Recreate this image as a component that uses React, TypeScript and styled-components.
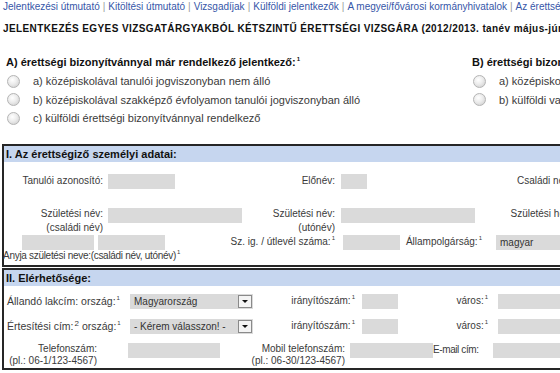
import React from "react";
import styled, { createGlobalStyle } from "styled-components";

const GlobalStyle = createGlobalStyle`
  html, body {
    margin: 0;
    padding: 0;
    overflow: hidden;
    background: #fff;
  }
  body {
    font-family: "Liberation Sans", Arial, sans-serif;
    font-size: 10px;
    color: #3a3a3a;
  }
`;

// Page
const Page = styled.div`
  width: 900px;
  padding-left: 2px;
`;

// Top navigation
const Nav = styled.div`
  padding: 1px 0 0 1px;
  height: 13px;
  line-height: 12px;
  white-space: nowrap;
`;

const NavLink = styled.a`
  color: #3656a8;
  text-decoration: none;
`;

const Sep = styled.span`
  color: #9a9a9a;
  margin: 0 3px;
`;

const Title = styled.h1`
  margin: 8px 0 0 1px;
  font-size: 10px;
  line-height: 14px;
  font-weight: bold;
  letter-spacing: 0.4px;
  color: #111;
  white-space: nowrap;
`;

// Applicant type choice
const Choices = styled.div`
  display: flex;
  margin-top: 19px;
`;

const ChoiceColumn = styled.div<{ $w: number }>`
  width: ${(p) => p.$w}px;
  flex-shrink: 0;
  padding-left: 4px;
  box-sizing: border-box;
`;

const ChoiceTitle = styled.div`
  font-weight: bold;
  font-size: 11px;
  line-height: 14px;
  color: #111;
  white-space: nowrap;
  margin-bottom: 3px;
`;

const RadioRow = styled.label`
  display: flex;
  align-items: center;
  height: 18.5px;
  font-size: 11px;
  white-space: nowrap;
`;

const Radio = styled.span`
  width: 11px;
  height: 11px;
  margin-left: 1px;
  margin-right: 13px;
  border-radius: 50%;
  border: 1px solid #b4b4b4;
  background: radial-gradient(circle at 40% 35%, #ffffff 0%, #ececec 45%, #c9c9c9 100%);
  flex-shrink: 0;
`;

// Form sections
const Section = styled.div<{ $top: number }>`
  margin-top: ${(p) => p.$top}px;
  border: 2px solid #262626;
  width: 880px;
`;

const SectionHead = styled.div`
  background: #c6d6ef;
  height: 16px;
  line-height: 16px;
  padding-left: 2px;
  font-size: 11px;
  font-weight: bold;
  color: #111;
`;

const SectionBody = styled.div<{ $pt: number; $pb: number }>`
  display: flex;
  flex-direction: column;
  padding: ${(p) => p.$pt}px 0 ${(p) => p.$pb}px 0;
`;

const Row = styled.div<{ $gap?: number; $align?: string }>`
  display: flex;
  align-items: ${(p) => p.$align || "center"};
  margin-top: ${(p) => p.$gap || 0}px;
`;

const Label = styled.div<{ $w: number; $gap?: number; $lh?: number; $ls?: number }>`
  width: ${(p) => p.$w}px;
  margin-right: ${(p) => (p.$gap === undefined ? 5 : p.$gap)}px;
  text-align: right;
  flex-shrink: 0;
  letter-spacing: ${(p) => p.$ls || 0}px;
  line-height: ${(p) => p.$lh || 14}px;
  white-space: nowrap;
`;

const LeftLabel = styled.div<{ $w: number }>`
  width: ${(p) => p.$w}px;
  padding-left: 3px;
  margin-right: 5px;
  box-sizing: border-box;
  flex-shrink: 0;
  font-size: 10.5px;
  line-height: 14px;
  white-space: nowrap;
`;

const Field = styled.div<{ $w: number; $top?: number }>`
  width: ${(p) => p.$w}px;
  height: 15px;
  margin-top: ${(p) => p.$top || 0}px;
  background: #dadada;
  flex-shrink: 0;
`;

const Select = styled.div<{ $w: number }>`
  width: ${(p) => p.$w}px;
  height: 15px;
  display: flex;
  align-items: center;
  justify-content: space-between;
  background: #dadada;
  padding: 0 1px 0 4px;
  box-sizing: border-box;
  flex-shrink: 0;
  white-space: nowrap;
  color: #333;
`;

const DropButton = styled.span`
  width: 12px;
  height: 11px;
  border: 1px solid #8a8a8a;
  background: #f4f4f4;
  display: flex;
  align-items: center;
  justify-content: center;

  &::after {
    content: "";
    border-left: 3px solid transparent;
    border-right: 3px solid transparent;
    border-top: 3px solid #111;
    margin-top: 1px;
  }
`;

const MotherCell = styled.div`
  width: 171px;
  flex-shrink: 0;
  display: flex;
  flex-direction: column;
  align-items: center;
`;

const MotherInputs = styled.div`
  display: flex;
  gap: 4px;
  padding-left: 8px;
`;

const Caption = styled.div`
  letter-spacing: -0.3px;
  line-height: 11px;
  padding-left: 4px;
  white-space: nowrap;
`;

const Sup = styled.sup<{ $big?: boolean }>`
  font-size: ${(p) => (p.$big ? 8 : 6)}px;
  line-height: 0;
  vertical-align: ${(p) => (p.$big ? "4px" : "5px")};
  margin-left: 1px;
`;

const links = [
  "Jelentkezési útmutató",
  "Kitöltési útmutató",
  "Vizsgadíjak",
  "Külföldi jelentkezők",
  "A megyei/fővárosi kormányhivatalok",
  "Az érettségi vizsgáról",
];

const App: React.FC = () => {
  return (
    <Page>
      <GlobalStyle />
      <Nav>
        {links.map((l, i) => (
          <React.Fragment key={l}>
            {i > 0 && <Sep>|</Sep>}
            <NavLink href="#">{l}</NavLink>
          </React.Fragment>
        ))}
      </Nav>
      <Title>
        JELENTKEZÉS EGYES VIZSGATÁRGYAKBÓL KÉTSZINTŰ ÉRETTSÉGI VIZSGÁRA (2012/2013. tanév május-júniusi
        vizsgaidőszak)
      </Title>

      <Choices>
        <ChoiceColumn $w={466}>
          <ChoiceTitle>
            A) érettségi bizonyítvánnyal már rendelkező jelentkező:<Sup>1</Sup>
          </ChoiceTitle>
          <RadioRow>
            <Radio />
            a) középiskolával tanulói jogviszonyban nem álló
          </RadioRow>
          <RadioRow>
            <Radio />
            b) középiskolával szakképző évfolyamon tanulói jogviszonyban álló
          </RadioRow>
          <RadioRow>
            <Radio />
            c) külföldi érettségi bizonyítvánnyal rendelkező
          </RadioRow>
        </ChoiceColumn>
        <ChoiceColumn $w={400}>
          <ChoiceTitle>
            B) érettségi bizonyítvánnyal nem rendelkező jelentkező:<Sup>1</Sup>
          </ChoiceTitle>
          <RadioRow>
            <Radio />
            a) középiskolával tanulói jogviszonyban álló
          </RadioRow>
          <RadioRow>
            <Radio />
            b) külföldi vagy hazai középiskolai tanuló
          </RadioRow>
        </ChoiceColumn>
      </Choices>

      <Section $top={16}>
        <SectionHead>I. Az érettségiző személyi adatai:</SectionHead>
        <SectionBody $pt={12} $pb={4}>
          <Row>
            <Label $w={99}>Tanulói azonosító:</Label>
            <Field $w={67} />
            <Label $w={160} $gap={6}>Előnév:</Label>
            <Field $w={26} />
            <Label $w={205} $gap={6}>Családi név:</Label>
            <Field $w={130} />
          </Row>
          <Row $gap={18} $align="flex-start">
            <Label $w={99}>
              Születési név:
              <br />
              (családi név)
            </Label>
            <Field $w={134} $top={1} />
            <Label $w={93} $gap={6}>
              Születési név:
              <br />
              (utónév)
            </Label>
            <Field $w={134} $top={1} />
            <Label $w={100} $gap={6}>Születési hely:</Label>
            <Field $w={130} $top={1} />
          </Row>
          <Row $gap={0} $align="flex-start">
            <MotherCell>
              <MotherInputs>
                <Field $w={72} />
                <Field $w={67} />
              </MotherInputs>
              <Caption>
                Anyja születési neve:(családi név, utónév)<Sup>1</Sup>
              </Caption>
            </MotherCell>
            <Label $w={160} $gap={8}>
              Sz. ig. / útlevél száma:<Sup>1</Sup>
            </Label>
            <Field $w={57} />
            <Label $w={82} $gap={14}>
              Állampolgárság:<Sup>1</Sup>
            </Label>
            <Select $w={120}>magyar</Select>
          </Row>
        </SectionBody>
      </Section>

      <Section $top={1}>
        <SectionHead>II. Elérhetősége:</SectionHead>
        <SectionBody $pt={8} $pb={1}>
          <Row>
            <LeftLabel $w={121}>
              Állandó lakcím: ország:<Sup>1</Sup>
            </LeftLabel>
            <Select $w={123}>
              Magyarország
              <DropButton />
            </Select>
            <Label $w={102} $gap={7}>
              irányítószám:<Sup>1</Sup>
            </Label>
            <Field $w={36} />
            <Label $w={90} $gap={10}>
              város:<Sup>1</Sup>
            </Label>
            <Field $w={130} />
          </Row>
          <Row $gap={10}>
            <LeftLabel $w={121}>
              Értesítési cím:<Sup $big>2</Sup> ország:<Sup>1</Sup>
            </LeftLabel>
            <Select $w={123}>
              - Kérem válasszon! -
              <DropButton />
            </Select>
            <Label $w={102} $gap={7}>
              irányítószám:<Sup>1</Sup>
            </Label>
            <Field $w={36} />
            <Label $w={90} $gap={10}>
              város:<Sup>1</Sup>
            </Label>
            <Field $w={130} />
          </Row>
          <Row $gap={9} $align="flex-start">
            <Label $w={93} $gap={31} $lh={12}>
              Telefonszám:
              <br />
              (pl.: 06-1/123-4567)
            </Label>
            <Field $w={92} />
            <Label $w={125} $gap={5} $lh={12}>
              Mobil telefonszám:
              <br />
              (pl.: 06-30/123-4567)
            </Label>
            <Field $w={83} />
            <Label $w={44} $gap={16} $ls={-0.4}>
              E-mail cím:
            </Label>
            <Field $w={130} />
          </Row>
        </SectionBody>
      </Section>
    </Page>
  );
};

export default App;
